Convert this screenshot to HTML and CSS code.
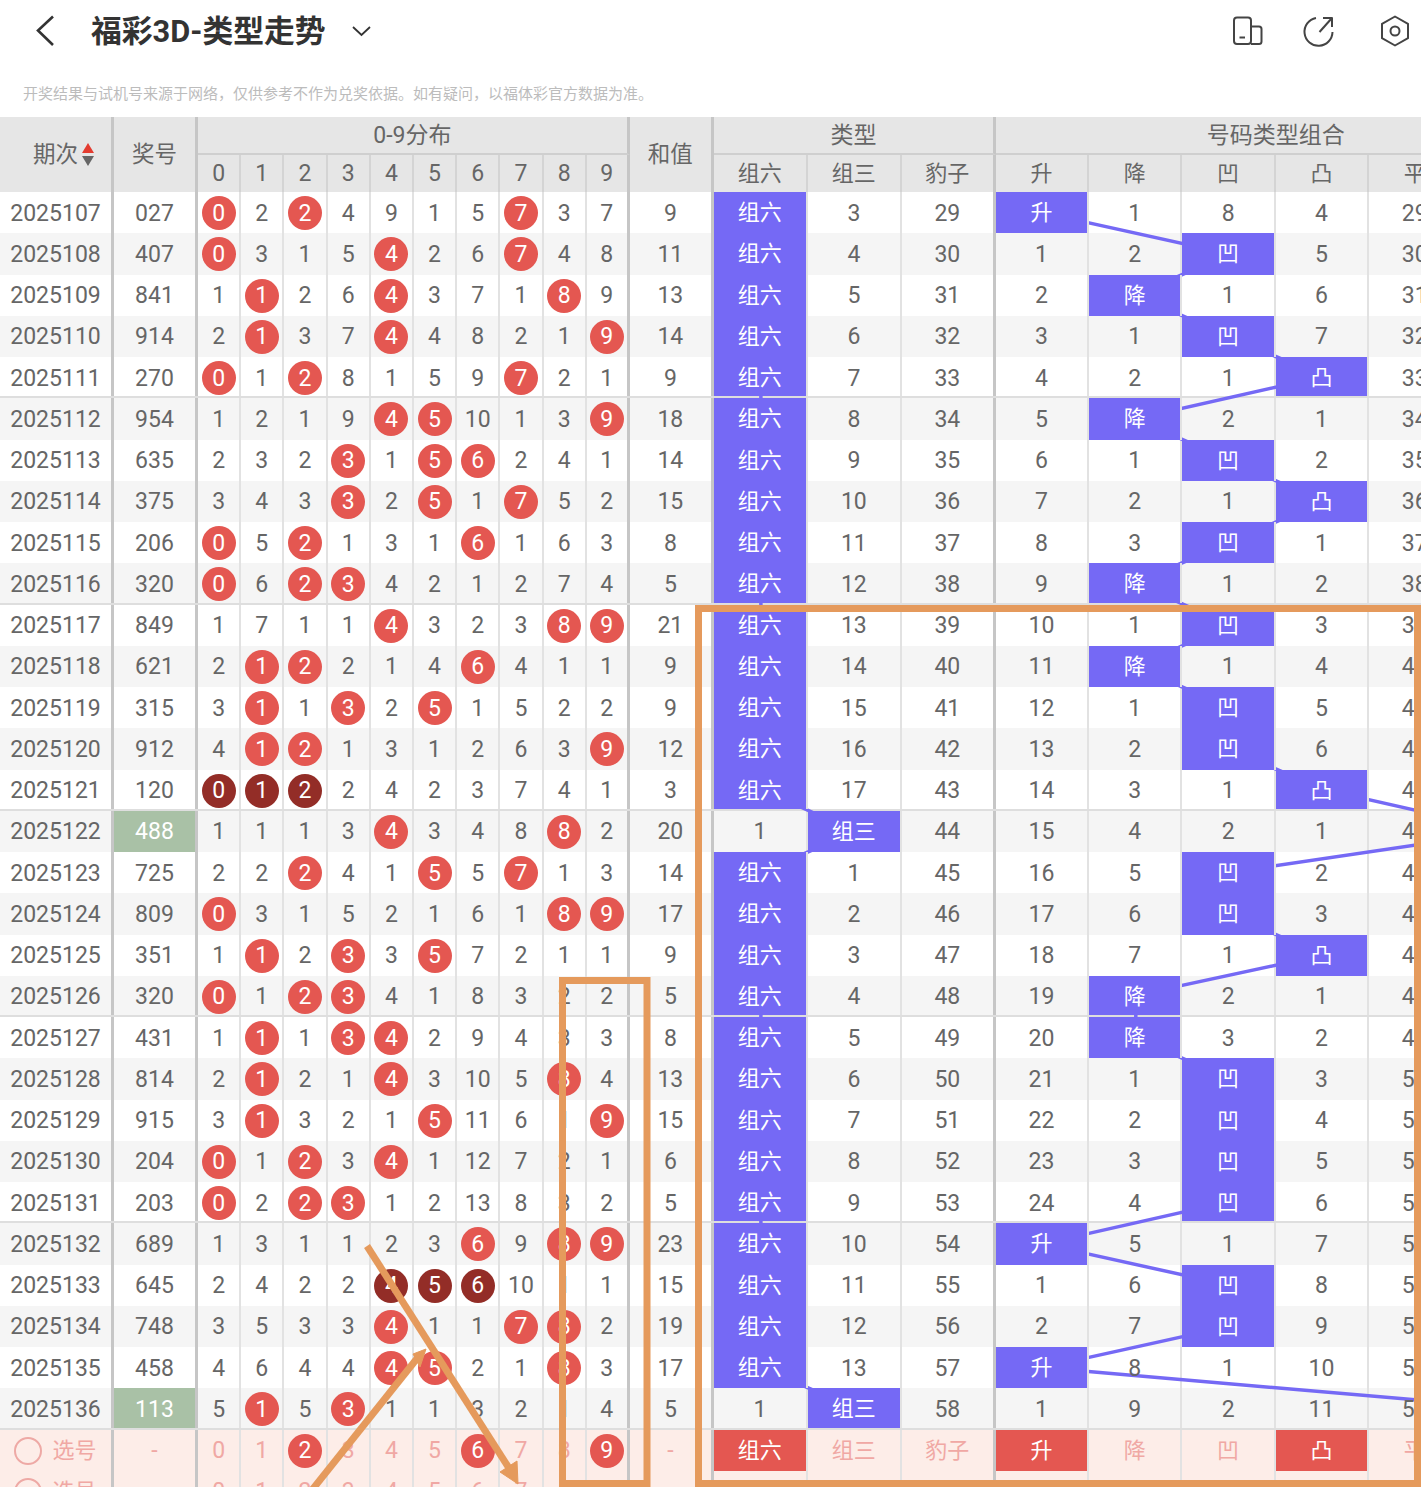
FILE: index.html
```html
<!DOCTYPE html>
<html lang="zh">
  <head>
    <meta charset="utf-8">
    <title>福彩3D-类型走势</title>
    <link rel="stylesheet" href="styles.css">
  </head>

  <body>
    <div class="page">
      <div class="appbar">
        <svg class="icon-back" viewBox="0 0 22 32"><path d="M18 1.500 3 15.500 18 30"/></svg>
        <div class="title">福彩3D-类型走势</div>
        <svg class="icon-drop" viewBox="0 0 22 12"><path d="M2 2 10.500 10 19 2"/></svg>
        <div class="tools">
          <svg class="tool" viewBox="0 0 40 40">
            <rect x="6" y="6.500" width="17" height="26.500" rx="3"/>
            <path d="M23 15.500h8a2.500 2.500 0 0 1 2.500 2.500v12.500a2.500 2.500 0 0 1-2.500 2.500h-8"/>
            <path d="M11.500 26.500h5.500"/>
          </svg>
          <svg class="tool tool-share" viewBox="0 0 40 40">
            <path d="M17 7A14 14 0 1 0 33.500 21"/>
            <path d="M20.500 21 32.500 7.500"/>
            <path d="M24 7h9v9"/>
          </svg>
          <svg class="tool tool-gear" viewBox="0 0 40 40">
            <path d="M20 5.500 33 12.800V27.200L20 34.500 7 27.200V12.800Z"/>
            <circle cx="20" cy="20" r="4.500"/>
          </svg>
        </div>
      </div>

      <div class="notice">开奖结果与试机号来源于网络，仅供参考不作为兑奖依据。如有疑问，以福体彩官方数据为准。</div>

      <div class="board">
        <div class="head">
          <div class="hcell span-rows thick period">
            <span>期次</span>
            <svg class="sort" viewBox="0 0 12 23">
              <path class="sort-up" d="M6 0 12 10H0Z"/>
              <path class="sort-down" d="M0 13H12L6 23Z"/>
            </svg>
          </div>
          <div class="hcell span-rows thick">奖号</div>
          <div class="hcell group span-dist thick">0-9分布</div>
          <div class="hcell span-rows thick">和值</div>
          <div class="hcell group span-type thick">类型</div>
          <div class="hcell group span-combo">号码类型组合</div>
          <div class="hcell sub digit">0</div>
          <div class="hcell sub digit">1</div>
          <div class="hcell sub digit">2</div>
          <div class="hcell sub digit">3</div>
          <div class="hcell sub digit">4</div>
          <div class="hcell sub digit">5</div>
          <div class="hcell sub digit">6</div>
          <div class="hcell sub digit">7</div>
          <div class="hcell sub digit">8</div>
          <div class="hcell sub digit thick">9</div>
          <div class="hcell sub">组六</div>
          <div class="hcell sub">组三</div>
          <div class="hcell sub thick">豹子</div>
          <div class="hcell sub">升</div>
          <div class="hcell sub">降</div>
          <div class="hcell sub">凹</div>
          <div class="hcell sub">凸</div>
          <div class="hcell sub">平</div>
          <div class="hcell sub">连</div>
        </div>

        <div class="rows" id="rows">
          <svg class="links" id="links"></svg>
        </div>
      </div>

      <svg class="marks" viewBox="0 0 1421 1487">
        <rect x="698.500" y="608.500" width="719" height="875"/>
        <rect x="562.500" y="980.500" width="84.500" height="503"/>
        <path d="M367 1246 514 1476"/>
        <path class="head-fill" d="M518 1484 500 1472 517 1461Z"/>
        <path d="M312 1490 419 1356"/>
        <path class="head-fill" d="M426 1349 413 1354 420 1367Z"/>
      </svg>
    </div>

    <script src="script.js"></script>
  </body>
</html>
```

FILE: styles.css
```css
* {
  box-sizing: border-box;
  margin: 0;
  padding: 0;
}

html, body {
  background: #fff;
  overflow: hidden;
}

body {
  font-family: Roboto, "Noto Sans CJK SC", sans-serif;
  color: #666;
}

.page {
  position: relative;
  width: 1421px;
  height: 1487px;
  overflow: hidden;
}

/* Top bar */
.appbar {
  display: flex;
  align-items: center;
  height: 62px;
  padding: 0 6px 0 35px;
}

.icon-back {
  width: 22px;
  height: 32px;
  fill: none;
  stroke: #333;
  stroke-width: 2.6;
}

.title {
  margin-left: 34px;
  padding-top: 2px;
  font-size: 30.800px;
  font-weight: 700;
  line-height: 1;
  color: #333;
}

.icon-drop {
  width: 22px;
  height: 12px;
  margin-left: 25px;
  fill: none;
  stroke: #333;
  stroke-width: 1.800;
}

.tools {
  display: flex;
  margin-left: auto;
}

.tool {
  width: 40px;
  height: 40px;
  fill: none;
  stroke: #444;
  stroke-width: 2;
  stroke-linejoin: round;
}

.tool-share {
  margin-left: 31px;
}

.tool-gear {
  margin-left: 36px;
}

.notice {
  height: 55px;
  padding: 22px 0 0 23px;
  font-size: 15px;
  line-height: 20px;
  color: #bcbcbc;
  white-space: nowrap;
}

/* Trend table */
.board {
  --cols: 114px 84px repeat(10, 43.200px) 84px repeat(3, 94px) repeat(6, 93.300px);
  width: 1700px;
}

.head {
  display: grid;
  grid-template-columns: var(--cols);
  grid-template-rows: 38px 37px;
  background: #e6e6e6;
  font-size: 22px;
  line-height: 1;
}

.hcell {
  display: flex;
  align-items: center;
  justify-content: center;
  border-right: 2px solid #d4d4d4;
}

.span-rows { grid-row: span 2; font-size: 22.500px; }
.span-dist { grid-column: span 10; }
.span-type { grid-column: span 3; }
.span-combo { grid-column: span 6; border-right: 0; }

.group {
  border-bottom: 2px solid #cfcfcf;
  font-size: 23px;
}

.digit {
  font-size: 23px;
}

.period {
  padding-left: 16px;
}

.sort {
  width: 12px;
  height: 23px;
  margin-left: 4px;
}

.sort-up { fill: #e33c30; }
.sort-down { fill: #666; }

.rows {
  position: relative;
  font-size: 23px;
  line-height: 1;
}

.links {
  position: absolute;
  top: 0;
  left: 0;
  width: 100%;
  height: 100%;
  z-index: 1;
  fill: none;
  stroke: #7569f5;
  stroke-width: 3.500;
}

.row {
  display: grid;
  grid-template-columns: var(--cols);
  height: 41.250px;
  background: #fff;
}

.row:nth-of-type(even) {
  background: #f5f5f5;
}

.row-end {
  border-bottom: 2px solid #dedede;
}

.row-end .cell {
  padding-top: 3px;
}

.row-pick,
.row-pick:nth-of-type(even) {
  background: #fdede8;
  color: #f0a8a4;
}

.cell {
  display: flex;
  align-items: center;
  justify-content: center;
  padding-top: 1px;
  border-right: 2px solid #e2e2e2;
  white-space: nowrap;
}

.hcell.thick,
.cell.thick {
  border-right: 3px solid #c6c6c6;
}

.cell span {
  position: relative;
  z-index: 2;
}

.cn {
  font-size: 22px;
}

.cell .ball {
  display: flex;
  align-items: center;
  justify-content: center;
  width: 34px;
  height: 34px;
  border-radius: 50%;
  background: #e45751;
  color: #fff;
}

.cell .ball-dark {
  background: #932d27;
}

.cell-hit {
  background: #a9c1a6;
  color: #fff;
}

.cell-on {
  position: relative;
  z-index: 2;
  background: #7569f5;
  background-clip: padding-box;
  color: #fff;
}

.row-pick .cell-on {
  background: #e45751;
  background-clip: padding-box;
}

.pick-ring {
  width: 28px;
  height: 28px;
  margin-right: 10px;
  border: 2px solid #eea9a5;
  border-radius: 50%;
}

/* Hand drawn annotations on top of the screenshot */
.marks {
  position: absolute;
  top: 0;
  left: 0;
  width: 1421px;
  height: 1487px;
  z-index: 3;
  fill: none;
  stroke: #e59a5c;
  stroke-width: 7;
}

.marks path {
  stroke-width: 7;
}

.marks .head-fill {
  fill: #e59a5c;
  stroke-width: 1;
}
```

FILE: script.js
```js
// period, number, omission for 0-9, combo hit (0 up, 1 down, 2 concave, 3 convex, 5 off screen)
const DATA = [
  ['2025107', '027', [0, 2, 2, 4, 9, 1, 5, 7, 3, 7], 0],
  ['2025108', '407', [0, 3, 1, 5, 4, 2, 6, 7, 4, 8], 2],
  ['2025109', '841', [1, 1, 2, 6, 4, 3, 7, 1, 8, 9], 1],
  ['2025110', '914', [2, 1, 3, 7, 4, 4, 8, 2, 1, 9], 2],
  ['2025111', '270', [0, 1, 2, 8, 1, 5, 9, 7, 2, 1], 3],
  ['2025112', '954', [1, 2, 1, 9, 4, 5, 10, 1, 3, 9], 1],
  ['2025113', '635', [2, 3, 2, 3, 1, 5, 6, 2, 4, 1], 2],
  ['2025114', '375', [3, 4, 3, 3, 2, 5, 1, 7, 5, 2], 3],
  ['2025115', '206', [0, 5, 2, 1, 3, 1, 6, 1, 6, 3], 2],
  ['2025116', '320', [0, 6, 2, 3, 4, 2, 1, 2, 7, 4], 1],
  ['2025117', '849', [1, 7, 1, 1, 4, 3, 2, 3, 8, 9], 2],
  ['2025118', '621', [2, 1, 2, 2, 1, 4, 6, 4, 1, 1], 1],
  ['2025119', '315', [3, 1, 1, 3, 2, 5, 1, 5, 2, 2], 2],
  ['2025120', '912', [4, 1, 2, 1, 3, 1, 2, 6, 3, 9], 2],
  ['2025121', '120', [0, 1, 2, 2, 4, 2, 3, 7, 4, 1], 3],
  ['2025122', '488', [1, 1, 1, 3, 4, 3, 4, 8, 8, 2], 5],
  ['2025123', '725', [2, 2, 2, 4, 1, 5, 5, 7, 1, 3], 2],
  ['2025124', '809', [0, 3, 1, 5, 2, 1, 6, 1, 8, 9], 2],
  ['2025125', '351', [1, 1, 2, 3, 3, 5, 7, 2, 1, 1], 3],
  ['2025126', '320', [0, 1, 2, 3, 4, 1, 8, 3, 2, 2], 1],
  ['2025127', '431', [1, 1, 1, 3, 4, 2, 9, 4, 3, 3], 1],
  ['2025128', '814', [2, 1, 2, 1, 4, 3, 10, 5, 8, 4], 2],
  ['2025129', '915', [3, 1, 3, 2, 1, 5, 11, 6, 1, 9], 2],
  ['2025130', '204', [0, 1, 2, 3, 4, 1, 12, 7, 2, 1], 2],
  ['2025131', '203', [0, 2, 2, 3, 1, 2, 13, 8, 3, 2], 2],
  ['2025132', '689', [1, 3, 1, 1, 2, 3, 6, 9, 8, 9], 0],
  ['2025133', '645', [2, 4, 2, 2, 4, 5, 6, 10, 1, 1], 2],
  ['2025134', '748', [3, 5, 3, 3, 4, 1, 1, 7, 8, 2], 2],
  ['2025135', '458', [4, 6, 4, 4, 4, 5, 2, 1, 8, 3], 0],
  ['2025136', '113', [5, 1, 5, 3, 1, 1, 3, 2, 1, 4], 5],
];

const TYPE_NAMES = ['组六', '组三', '豹子'];
const COMBO_NAMES = ['升', '降', '凹', '凸', '平', '连'];
const DARK_ROWS = ['2025121', '2025133'];

const rowsEl = document.getElementById('rows');
const linksEl = document.getElementById('links');

function addCell(row, html, className) {
  const cell = document.createElement('div');
  cell.className = `cell ${className || ''}`;
  cell.innerHTML = html;
  row.appendChild(cell);
  return cell;
}

function addRow(className) {
  const row = document.createElement('div');
  row.className = `row ${className || ''}`;
  rowsEl.appendChild(row);
  return row;
}

function sumDigits(number) {
  return [...number].reduce((total, d) => total + Number(d), 0);
}

// A number with a repeated digit is a 组三, the rest are 组六
function typeIndex(number) {
  return new Set(number).size === 3 ? 0 : 1;
}

function drawLink(cells) {
  const base = rowsEl.getBoundingClientRect();
  const points = cells.map(cell => {
    const box = cell.getBoundingClientRect();
    const x = box.left + box.width / 2 - base.left;
    const y = box.top + box.height / 2 - base.top;
    return `${x.toFixed(1)},${y.toFixed(1)}`;
  });
  const line = document.createElementNS('http://www.w3.org/2000/svg', 'polyline');
  line.setAttribute('points', points.join(' '));
  linksEl.appendChild(line);
}

const typeCounts = [0, 2, 28];
const comboCounts = [0, 0, 7, 3, 28, 20];
const typeHits = [];
const comboHits = [];

DATA.forEach(([period, number, omissions, combo], index) => {
  const row = addRow((index + 1) % 5 === 0 ? 'row-end' : '');
  const type = typeIndex(number);

  addCell(row, `<span>${period}</span>`, 'thick');
  addCell(row, `<span>${number}</span>`, type === 1 ? 'thick cell-hit' : 'thick');

  omissions.forEach((value, digit) => {
    const thick = digit === 9 ? 'thick' : '';
    if (number.includes(String(digit))) {
      const dark = DARK_ROWS.includes(period) ? 'ball-dark' : '';
      addCell(row, `<span class="ball ${dark}">${digit}</span>`, thick);
    } else {
      addCell(row, `<span>${value}</span>`, thick);
    }
  });

  addCell(row, `<span>${sumDigits(number)}</span>`, 'thick');

  TYPE_NAMES.forEach((name, i) => {
    const thick = i === 2 ? 'thick' : '';
    if (i === type) {
      typeCounts[i] = 0;
      typeHits.push(addCell(row, `<span class="cn">${name}</span>`, `${thick} cell-on`));
    } else {
      typeCounts[i] += 1;
      addCell(row, `<span>${typeCounts[i]}</span>`, thick);
    }
  });

  COMBO_NAMES.forEach((name, i) => {
    if (i === combo) {
      comboCounts[i] = 0;
      comboHits.push(addCell(row, `<span class="cn">${name}</span>`, 'cell-on'));
    } else {
      comboCounts[i] += 1;
      addCell(row, `<span>${comboCounts[i]}</span>`);
    }
  });
});

function addPickRow(balls, onTypes, onCombos) {
  const row = addRow('row-pick');
  addCell(row, '<div class="pick-ring"></div><span class="cn">选号</span>', 'thick');
  addCell(row, '<span>-</span>', 'thick');
  for (let digit = 0; digit < 10; digit++) {
    const html = balls.includes(digit)
      ? `<span class="ball">${digit}</span>`
      : `<span>${digit}</span>`;
    addCell(row, html, digit === 9 ? 'thick' : '');
  }
  addCell(row, '<span>-</span>', 'thick');
  TYPE_NAMES.forEach((name, i) => {
    const on = onTypes.includes(i) ? 'cell-on' : '';
    addCell(row, `<span class="cn">${name}</span>`, `${i === 2 ? 'thick' : ''} ${on}`);
  });
  COMBO_NAMES.forEach((name, i) => {
    addCell(row, `<span class="cn">${name}</span>`, onCombos.includes(i) ? 'cell-on' : '');
  });
}

addPickRow([2, 6, 9], [0], [0, 3]);
addPickRow([], [], []);

drawLink(typeHits);
drawLink(comboHits);
```
